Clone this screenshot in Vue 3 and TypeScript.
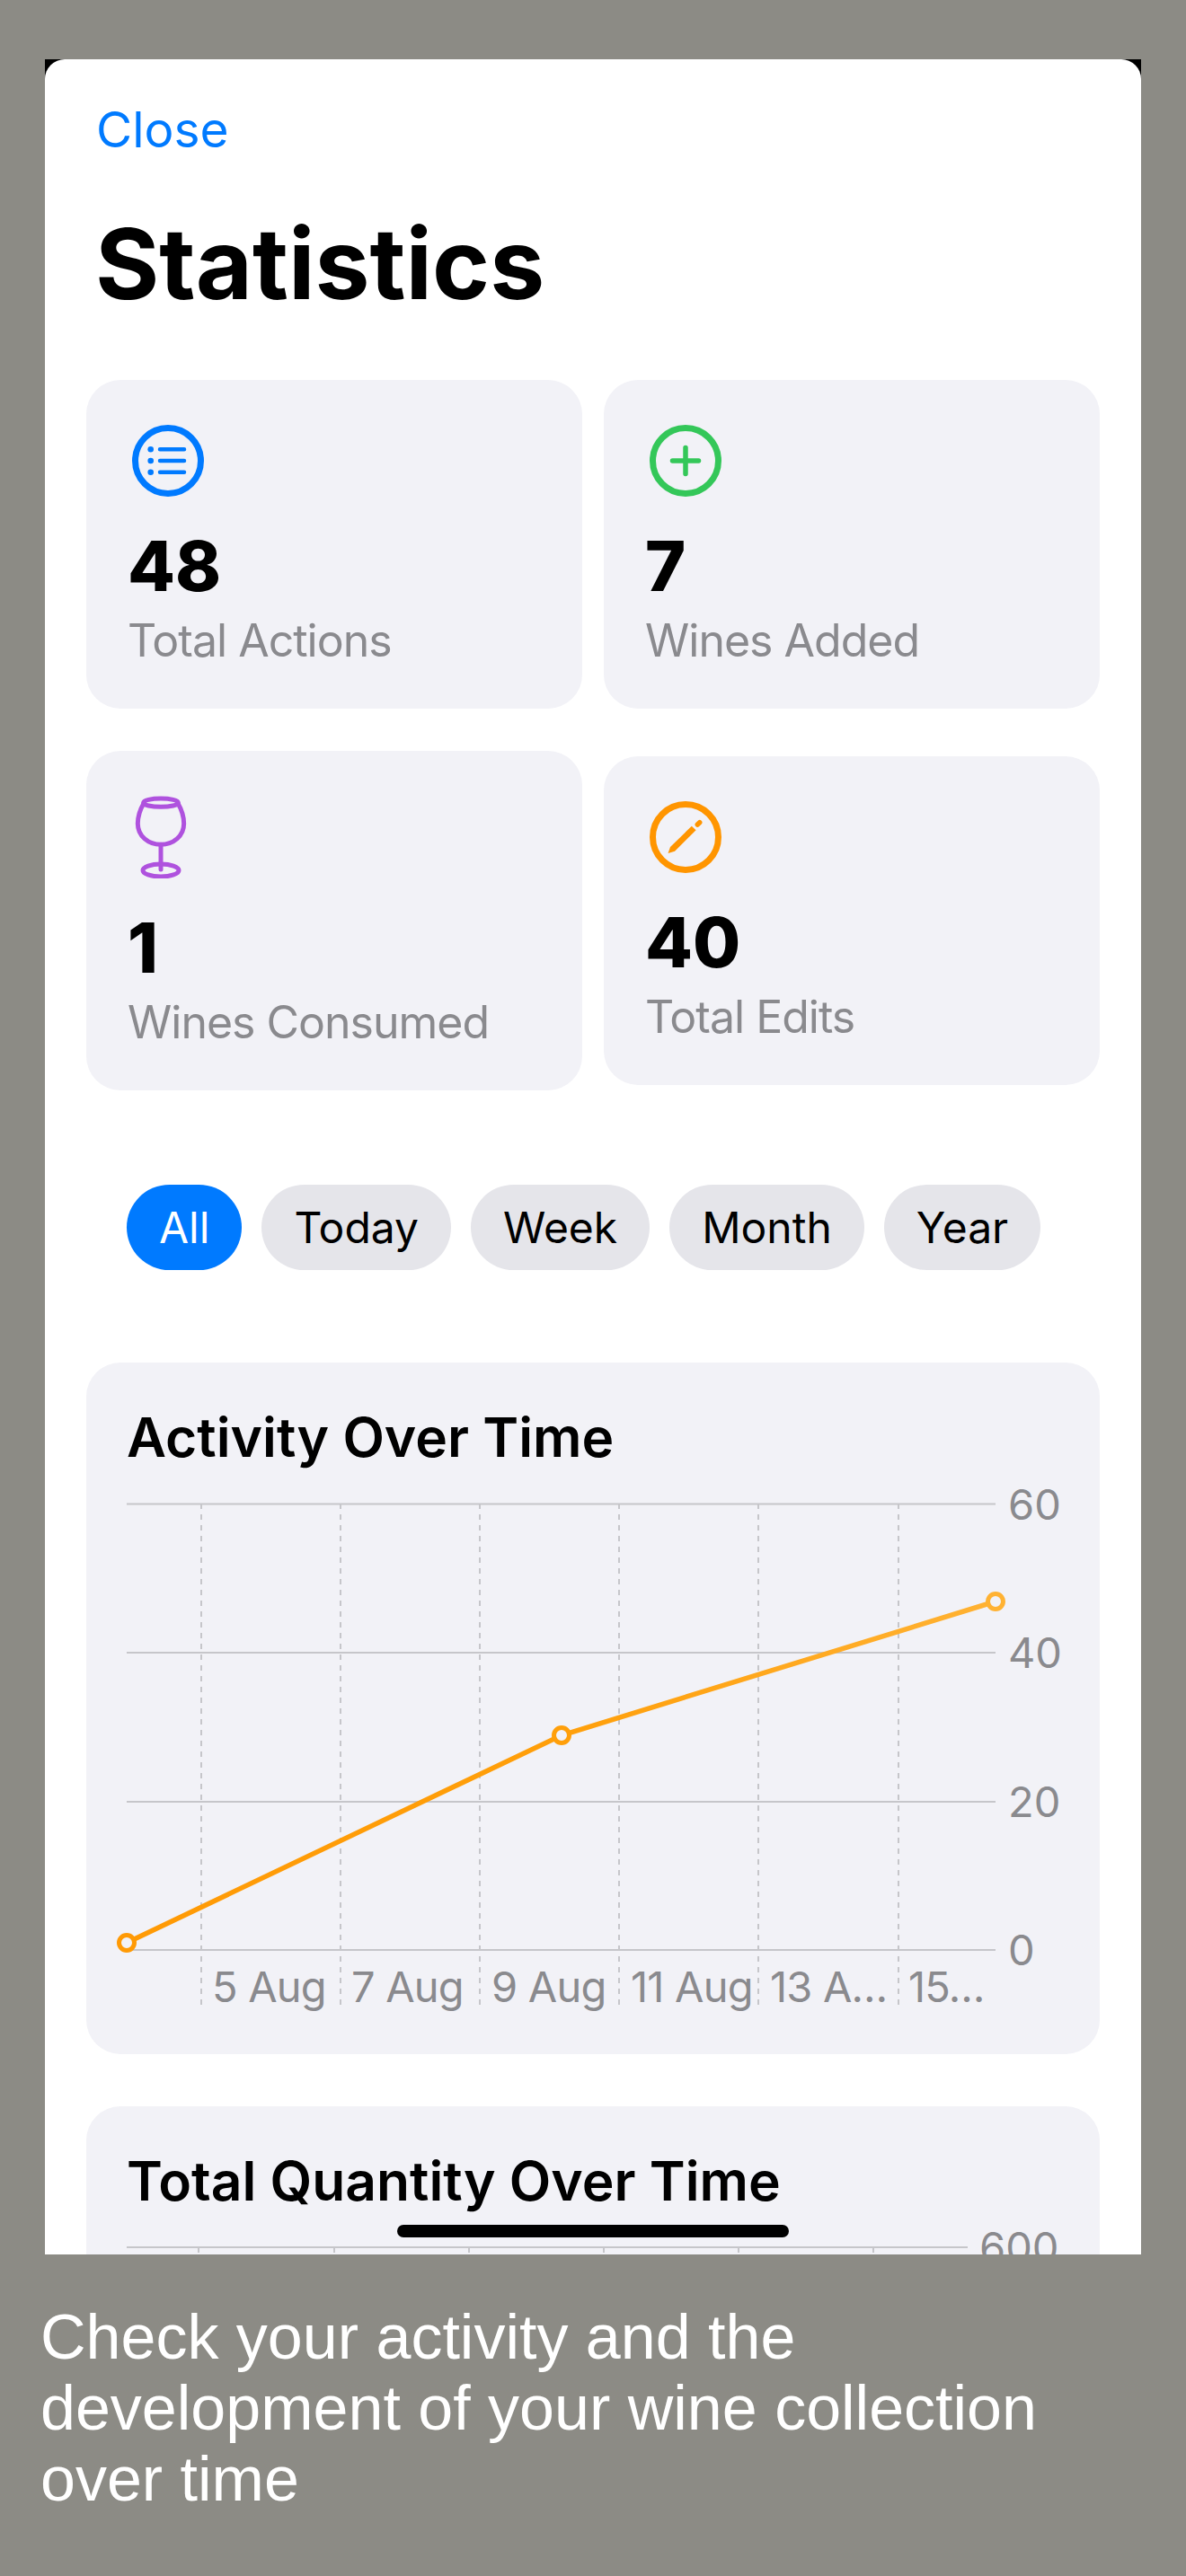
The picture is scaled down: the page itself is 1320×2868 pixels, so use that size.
<template>
  <div class="page">
    <div class="phone">
      <div class="sheet">
        <a class="close">Close</a>
        <h1 class="title">Statistics</h1>

        <div class="stats">
          <div v-for="s in stats" :key="s.label" class="stat">
            <svg v-if="s.icon === 'list'" class="icon" viewBox="0 0 80 80" fill="none" stroke="#007aff">
              <circle cx="40" cy="40" r="36.5" stroke-width="7" />
              <g stroke-width="4.5" stroke-linecap="round">
                <path d="M31 27.3H58M31 40H58M31 52.7H58" />
              </g>
              <g fill="#007aff" stroke="none">
                <circle cx="20.7" cy="27.3" r="3.3" />
                <circle cx="20.7" cy="40" r="3.3" />
                <circle cx="20.7" cy="52.7" r="3.3" />
              </g>
            </svg>
            <svg v-else-if="s.icon === 'plus'" class="icon" viewBox="0 0 80 80" fill="none" stroke="#34c759">
              <circle cx="40" cy="40" r="36.5" stroke-width="7" />
              <path d="M25.5 40H54.5M40 25.5V54.5" stroke-width="5.5" stroke-linecap="round" />
            </svg>
            <svg v-else-if="s.icon === 'wine'" class="icon wine" viewBox="55 47 180 276" fill="none" stroke="#af52de" stroke-width="15">
              <ellipse cx="145" cy="70" rx="58" ry="14" />
              <path d="M89 70C76 92 68 118 68 140C68 182 104 210 145 210C186 210 222 182 222 140C222 118 214 92 201 70" />
              <path d="M145 210V293" stroke-linecap="round" />
              <ellipse cx="145" cy="296" rx="60" ry="21" />
            </svg>
            <svg v-else class="icon" viewBox="0 0 80 80" fill="none" stroke="#ff9500">
              <circle cx="40" cy="40" r="36.5" stroke-width="7" />
              <path d="M20.5 58L23 51L46.8 27.7L51.6 32.3L28 55.8Z" fill="#ff9500" stroke="none" />
              <path d="M53.3 26L55.7 23.7" stroke-width="5.5" stroke-linecap="round" />
            </svg>
            <div class="value">{{ s.value }}</div>
            <div class="label">{{ s.label }}</div>
          </div>
        </div>

        <div class="pills">
          <span v-for="(p, i) in periods" :key="p" class="pill" :class="{ active: i === 0 }">{{ p }}</span>
        </div>

        <section class="chart-card">
          <h2 class="chart-title">Activity Over Time</h2>
          <svg class="plot" width="1040" height="563" viewBox="0 0 1040 563">
            <line v-for="y in activity.rows" :key="y.label" class="grid" x1="0" :y1="y.y" x2="967" :y2="y.y" />
            <line v-for="x in activity.cols" :key="x" class="tick" :x1="x" y1="0" :x2="x" y2="563" />
            <text v-for="y in activity.rows" :key="y.label" class="axis" x="981" :y="y.y + 17">{{ y.label }}</text>
            <text v-for="d in days" :key="d.text" class="axis day" :x="d.x" y="555">{{ d.text }}</text>
            <defs>
              <linearGradient id="line-grad" x1="0" y1="0" x2="1" y2="0">
                <stop offset="0" stop-color="#ff9a05" />
                <stop offset="0.5" stop-color="#ff9f0a" />
                <stop offset="1" stop-color="#ffb233" />
              </linearGradient>
            </defs>
            <path d="M0 489L484 258L967 109" fill="none" stroke="url(#line-grad)" stroke-width="5.5" />
            <circle cx="0" cy="489" r="8.5" class="dot" stroke="#ff9a05" />
            <circle cx="484" cy="258" r="8.5" class="dot" stroke="#ff9f0a" />
            <circle cx="967" cy="109" r="8.5" class="dot" stroke="#ffb233" />
          </svg>
        </section>

        <section class="chart-card second">
          <h2 class="chart-title">Total Quantity Over Time</h2>
          <svg class="plot" width="1040" height="400" viewBox="0 0 1040 400">
            <line class="grid" x1="0" y1="0" x2="936" y2="0" />
            <line v-for="x in quantityCols" :key="x" class="tick" :x1="x" y1="0" :x2="x" y2="400" />
            <text class="axis" x="949" y="17">600</text>
          </svg>
        </section>
      </div>
      <div class="home-bar"></div>
    </div>
    <p class="caption">Check your activity and the development of your wine collection over time</p>
  </div>
</template>

<script setup lang="ts">
const stats = [
  { icon: 'list', value: 48, label: 'Total Actions' },
  { icon: 'plus', value: 7, label: 'Wines Added' },
  { icon: 'wine', value: 1, label: 'Wines Consumed' },
  { icon: 'pencil', value: 40, label: 'Total Edits' },
]

const periods = ['All', 'Today', 'Week', 'Month', 'Year']

const activity = {
  rows: [
    { label: '60', y: 0.5 },
    { label: '40', y: 166 },
    { label: '20', y: 332 },
    { label: '0', y: 497 },
  ],
  cols: [83, 238, 393, 548, 703, 859],
}

const days = [
  { text: '5 Aug', x: 95 },
  { text: '7 Aug', x: 250 },
  { text: '9 Aug', x: 406 },
  { text: '11 Aug', x: 561 },
  { text: '13 A…', x: 716 },
  { text: '15…', x: 870 },
]

const quantityCols = [80, 231, 381, 531, 681, 831]
</script>

<style>
body {
  margin: 0;
  background: #8c8b85;
}
</style>

<style scoped>
.page {
  width: 1320px;
  height: 2868px;
  padding-top: 66px;
  box-sizing: border-box;
  background: #8c8b85;
  font-family: Inter, "Liberation Sans", sans-serif;
  overflow: hidden;
}
.phone {
  position: relative;
  width: 1220px;
  height: 2444px;
  margin-left: 50px;
  background: #000;
  overflow: hidden;
}
.sheet {
  height: 100%;
  padding: 0 46px;
  box-sizing: border-box;
  background: #fff;
  border-radius: 22px 22px 0 0;
  overflow: hidden;
}
.close {
  display: block;
  margin: 46px 0 0 11px;
  font-size: 55px;
  line-height: 64px;
  color: #007aff;
}
.title {
  margin: 52px 0 0 10px;
  font-size: 109px;
  line-height: 130px;
  font-weight: 700;
  color: #000;
}
.stats {
  display: grid;
  grid-template-columns: 552px 552px;
  column-gap: 24px;
  row-gap: 47px;
  align-items: center;
  margin-top: 65px;
}
.stat {
  padding: 50px 46px 0;
  height: 366px;
  box-sizing: border-box;
  background: #f2f2f7;
  border-radius: 38px;
}
.stat:nth-child(3) {
  height: 378px;
}
.icon {
  display: block;
  width: 80px;
  height: 80px;
  margin-left: 5px;
}
.icon.wine {
  width: 60px;
  height: 92px;
  margin-left: 7px;
}
.value {
  margin-top: 33px;
  font-size: 77px;
  line-height: 88px;
  font-weight: 800;
  color: #000;
}
.label {
  margin-top: 9px;
  font-size: 50px;
  line-height: 60px;
  letter-spacing: -1px;
  color: #8a8a8e;
}
.pills {
  display: flex;
  gap: 22px;
  margin: 105px 0 0 45px;
}
.pill {
  display: flex;
  align-items: center;
  height: 95px;
  padding: 0 36px;
  border-radius: 48px;
  background: #e5e5ea;
  font-size: 48px;
  font-weight: 400;
  color: #000;
}
.pill.active {
  background: #007aff;
  color: #fff;
}
.chart-card {
  height: 770px;
  margin-top: 103px;
  padding-left: 45px;
  box-sizing: border-box;
  background: #f2f2f7;
  border-radius: 38px;
}
.chart-card.second {
  height: 800px;
  margin-top: 58px;
}
.chart-title {
  height: 157px;
  margin: 0;
  padding-top: 46px;
  box-sizing: border-box;
  font-size: 60.5px;
  line-height: 75px;
  font-weight: 600;
  color: #000;
}
.plot {
  display: block;
  overflow: visible;
}
.grid {
  stroke: #c6c6ca;
  stroke-width: 2;
}
.tick {
  stroke: #c6c6ca;
  stroke-width: 2;
  stroke-dasharray: 6 6;
}
.axis {
  font-family: Inter, "Liberation Sans", sans-serif;
  font-size: 47px;
  fill: #8a8a8e;
}
.day {
  letter-spacing: -0.8px;
}
.dot {
  fill: #f2f2f7;
  stroke-width: 5;
}
.home-bar {
  position: absolute;
  left: 392px;
  top: 2411px;
  width: 436px;
  height: 14px;
  border-radius: 7px;
  background: #000;
}
.caption {
  width: 1180px;
  margin: 53px 0 0 45px;
  font-family: "Liberation Sans", Arial, sans-serif;
  font-size: 70px;
  line-height: 79px;
  color: #fff;
}
</style>
